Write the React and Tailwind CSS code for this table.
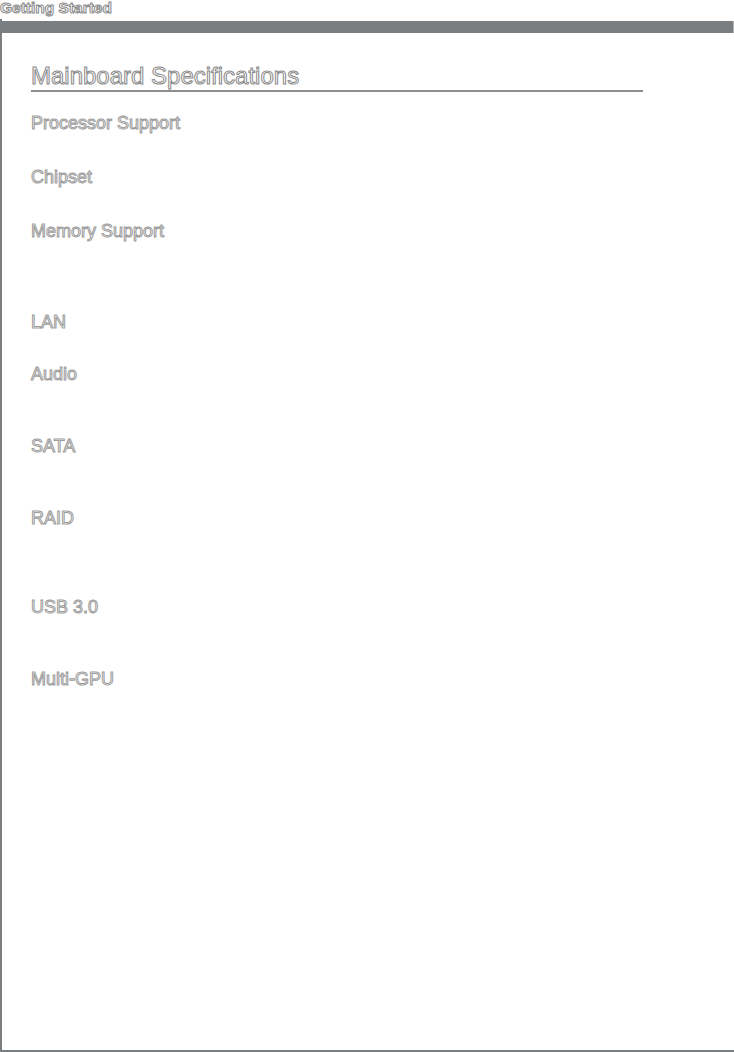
import React from "react";

const outline = "text-white [-webkit-text-stroke:1px_#9c9c9c]";

// label + height of its row (value column is blank in the page)
const specs = [
  { label: "Processor Support", h: "h-[54px]" },
  { label: "Chipset", h: "h-[54px]" },
  { label: "Memory Support", h: "h-[91px]" },
  { label: "LAN", h: "h-[52px]" },
  { label: "Audio", h: "h-[72px]" },
  { label: "SATA", h: "h-[72px]" },
  { label: "RAID", h: "h-[89px]" },
  { label: "USB 3.0", h: "h-[72px]" },
  { label: "Multi-GPU", h: "h-[72px]" },
];

export default function App() {
  return (
    <div className="w-[734px] h-[1052px] bg-white overflow-hidden font-['Liberation_Sans',Arial,sans-serif]">
      <div className="h-[19px] text-[15.5px] leading-[15px] font-bold text-white [-webkit-text-stroke:1px_#8a8a8a]">
        Getting Started
      </div>
      <div className="h-[1033px] border-l-2 border-b-2 border-[#7a7e81] flex flex-col">
        <div className="mt-[2px] h-[12px] bg-[#7a7e81] border-r border-[#b4b6b8]" />
        <div className="pl-[29px]">
          <h1 className="mt-[29px] w-[612px] border-b-2 border-[#8e8e8e] text-[24px] leading-[28px] text-white [-webkit-text-stroke:1px_#8a8a8a]">
            Mainboard Specifications
          </h1>
          <div className="mt-[21px] flex flex-col">
            {specs.map((s) => (
              <div key={s.label} className={`${s.h} text-[18px] leading-[20px] ${outline}`}>
                {s.label}
              </div>
            ))}
          </div>
        </div>
      </div>
    </div>
  );
}
